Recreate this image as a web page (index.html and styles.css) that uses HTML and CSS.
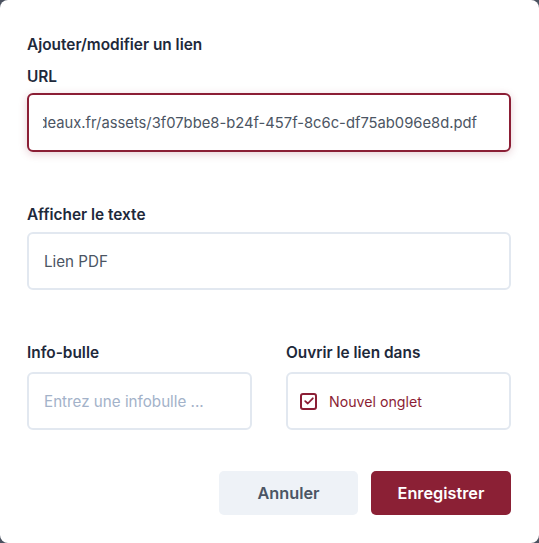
FILE: index.html
```html
<!DOCTYPE html>
<html lang="fr">
<head>
<meta charset="utf-8">
<title>Ajouter/modifier un lien</title>
<link rel="stylesheet" href="styles.css">
</head>
<body>
<div class="dialog">
  <h2 class="title">Ajouter/modifier un lien</h2>
  <div class="group group-url">
    <label class="label">URL</label>
    <div class="field field-focus">
      <div class="clip"><span class="value">https://www.bordeaux.fr/assets/3f07bbe8-b24f-457f-8c6c-df75ab096e8d.pdf</span></div>
    </div>
  </div>
  <div class="group group-text">
    <label class="label">Afficher le texte</label>
    <div class="field"><span class="value">Lien PDF</span></div>
  </div>
  <div class="row">
    <div class="group col">
      <label class="label">Info-bulle</label>
      <div class="field"><span class="placeholder">Entrez une infobulle ...</span></div>
    </div>
    <div class="group col">
      <label class="label">Ouvrir le lien dans</label>
      <div class="field field-check">
        <span class="checkbox">
          <svg width="10" height="8" viewBox="0 0 10 8"><path d="M1.2 4.1 L3.8 6.5 L8.8 1.3" fill="none" stroke="#8b1e35" stroke-width="1.8" stroke-linecap="round" stroke-linejoin="round"/></svg>
        </span>
        <span class="check-label">Nouvel onglet</span>
      </div>
    </div>
  </div>
  <div class="actions">
    <button class="btn btn-cancel">Annuler</button>
    <button class="btn btn-save">Enregistrer</button>
  </div>
</div>
</body>
</html>
```
FILE: styles.css
```css
* { box-sizing: border-box; }
html, body { margin: 0; padding: 0; }
body {
  background: #4b5260;
  font-family: Inter, "Noto Sans", "Liberation Sans", sans-serif;
  width: 539px;
  height: 543px;
  overflow: hidden;
}
.dialog {
  background: #ffffff;
  width: 539px;
  height: 543px;
  border-radius: 8px;
  padding: 35px 28px 0 27px;
  display: flex;
  flex-direction: column;
}
.title {
  margin: 0;
  font-size: 15.4px;
  line-height: 20px;
  font-weight: 600;
  color: #1e293b;
}
.group { display: flex; flex-direction: column; }
.group-url { margin-top: 12px; }
.group-text { margin-top: 53px; }
.label {
  font-size: 15.4px;
  line-height: 20px;
  font-weight: 600;
  color: #1e293b;
  margin-bottom: 7px;
}
.group-url .label { margin-bottom: 6px; }
.row .label { margin-bottom: 9px; }
.field {
  height: 58px;
  border: 2px solid #e2e8f0;
  border-radius: 6px;
  display: flex;
  align-items: center;
  padding: 0 16px 0 15px;
  font-size: 15.2px;
  color: #4b5563;
}
.field-focus {
  height: 59px;
  border-color: #8b1e35;
  box-shadow: 0 2px 8px rgba(139, 30, 53, 0.22);
  padding: 0 32px 0 14px;
  font-size: 14.75px;
}
.clip {
  flex: 1;
  overflow: hidden;
  display: flex;
  justify-content: flex-end;
  white-space: nowrap;
}
.value { white-space: nowrap; color: #4b5563; }
.placeholder { color: #a3b2c9; }
.row {
  margin-top: 53px;
  display: flex;
  gap: 34px;
}
.col { flex: 1; }
.field-check { padding-left: 12px; gap: 12px; }
.checkbox {
  width: 17px;
  height: 17px;
  border: 2px solid #8b1e35;
  border-radius: 3px;
  display: flex;
  align-items: center;
  justify-content: center;
}
.check-label { font-size: 14.2px; color: #8b1e35; }
.actions {
  margin-top: 41px;
  display: flex;
  justify-content: flex-end;
  gap: 13px;
}
.btn {
  height: 44px;
  border: none;
  border-radius: 5px;
  font-family: inherit;
  font-size: 16.3px;
  font-weight: 600;
  padding: 0;
}
.btn-cancel { width: 139px; background: #eef2f7; color: #4b5563; }
.btn-save { width: 140px; background: #8b2035; color: #ffffff; }
```
